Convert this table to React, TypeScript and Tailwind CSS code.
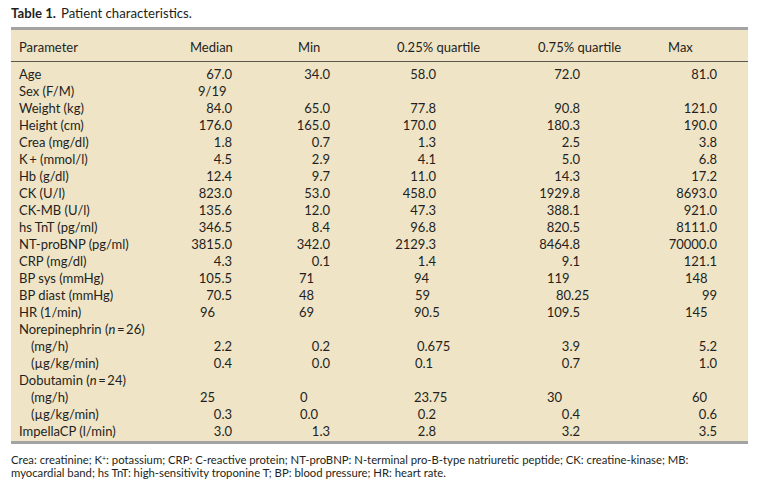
import React from "react";

type Cell = [string, string?];
type Row = { label: React.ReactNode; indent?: boolean; cells?: Cell[] };

const R = "text-right";

const rows: Row[] = [
  { label: "Age", cells: [["67.0"], ["34.0"], ["58.0"], ["72.0"], ["81.0"]] },
  { label: "Sex (F/M)", cells: [["9/19", "pl-[8px]"], [""], [""], [""], [""]] },
  { label: "Weight (kg)", cells: [["84.0"], ["65.0"], ["77.8"], ["90.8"], ["121.0"]] },
  { label: "Height (cm)", cells: [["176.0"], ["165.0"], ["170.0"], ["180.3"], ["190.0"]] },
  { label: "Crea (mg/dl)", cells: [["1.8"], ["0.7"], ["1.3"], ["2.5"], ["3.8"]] },
  { label: "K\u2009+ (mmol/l)", cells: [["4.5"], ["2.9"], ["4.1"], ["5.0"], ["6.8"]] },
  { label: "Hb (g/dl)", cells: [["12.4"], ["9.7"], ["11.0"], ["14.3"], ["17.2"]] },
  { label: "CK (U/l)", cells: [["823.0"], ["53.0"], ["458.0"], ["1929.8"], ["8693.0"]] },
  { label: "CK-MB (U/l)", cells: [["135.6"], ["12.0"], ["47.3"], ["388.1"], ["921.0"]] },
  { label: "hs TnT (pg/ml)", cells: [["346.5"], ["8.4"], ["96.8"], ["820.5"], ["8111.0"]] },
  { label: "NT-proBNP (pg/ml)", cells: [["3815.0"], ["342.0"], ["2129.3"], ["8464.8"], ["70000.0"]] },
  { label: "CRP (mg/dl)", cells: [["4.3"], ["0.1"], ["1.4"], ["9.1"], ["121.1"]] },
  {
    label: "BP sys (mmHg)",
    cells: [["105.5"], ["71", "pl-[67px]"], ["94", "pl-[84px]"], ["119", "pl-[111px]"], ["148", "pl-[105px]"]],
  },
  {
    label: "BP diast (mmHg)",
    cells: [["70.5"], ["48", "pl-[67px]"], ["59", "pl-[85px]"], ["80.25", "pl-[120px]"], ["99"]],
  },
  {
    label: "HR (1/min)",
    cells: [["96", "pl-[10px]"], ["69", "pl-[67px]"], ["90.5", "pl-[84px]"], ["109.5"], ["145", "pl-[105px]"]],
  },
  {
    label: (
      <>
        Norepinephrin (<i>n</i>
        {"\u2009=\u200926)"}
      </>
    ),
  },
  {
    label: "(mg/h)",
    indent: true,
    cells: [["2.2"], ["0.2"], ["0.675", "pl-[87px]"], ["3.9"], ["5.2"]],
  },
  {
    label: "(\u00b5g/kg/min)",
    indent: true,
    cells: [["0.4"], ["0.0"], ["0.1", "pl-[85px]"], ["0.7"], ["1.0"]],
  },
  {
    label: (
      <>
        Dobutamin (<i>n</i>
        {"\u2009=\u200924)"}
      </>
    ),
  },
  {
    label: "(mg/h)",
    indent: true,
    cells: [["25", "pl-[10px]"], ["0", "pl-[68px]"], ["23.75", "pl-[84px]"], ["30", "pl-[111px]"], ["60", "pl-[112px]"]],
  },
  {
    label: "(\u00b5g/kg/min)",
    indent: true,
    cells: [["0.3"], ["0.0", "pl-[68px]"], ["0.2"], ["0.4"], ["0.6"]],
  },
  { label: "ImpellaCP (l/min)", cells: [["3.0"], ["1.3"], ["2.8"], ["3.2"], ["3.5"]] },
];

const colW = ["w-[42px]", "w-[98px]", "w-[106px]", "w-[144px]", "w-[137px]"];

function DataRow({ row }: { row: Row }) {
  return (
    <div className="flex h-[17px] items-center whitespace-nowrap">
      <div className={`w-[179px] shrink-0 ${row.indent ? "pl-[20px]" : "pl-[8px]"}`}>{row.label}</div>
      {row.cells?.map(([text, cls], i) => (
        <div key={i} className={`${colW[i]} shrink-0 ${cls ?? R}`}>
          {text}
        </div>
      ))}
    </div>
  );
}

export default function App() {
  return (
    <div className="h-[488px] w-[757px] overflow-hidden bg-white font-['Lato',sans-serif] text-[#231f20] tabular-nums">
      {/* Caption */}
      <div className="flex h-[27px] items-center pl-[11px] text-[13.2px]">
        <span className="font-bold">Table 1.</span>
        <span className="ml-[5px]">Patient characteristics.</span>
      </div>

      {/* Table */}
      <div className="ml-[11px] w-[737px] border-y-[3px] border-[#a3a3a3] bg-[#f0e4c7] text-[13px]">
        <div className="flex h-[32px] items-center whitespace-nowrap border-b border-[#5a5650] pt-[4px]">
          <div className="w-[179px] shrink-0 pl-[8px]">Parameter</div>
          <div className="w-[42px] shrink-0 text-right">Median</div>
          <div className="w-[98px] shrink-0 pl-[66px]">Min</div>
          <div className="w-[106px] shrink-0 pl-[67px]">0.25% quartile</div>
          <div className="w-[144px] shrink-0 pl-[102px]">0.75% quartile</div>
          <div className="w-[137px] shrink-0 pl-[88px]">Max</div>
        </div>
        <div className="pb-[1px] pt-[4px]">
          {rows.map((row, i) => (
            <DataRow key={i} row={row} />
          ))}
        </div>
      </div>

      {/* Footnote */}
      <div className="pl-[11px] pt-[9px] text-[11.3px] leading-[13px]">
        Crea: creatinine; K<sup className="text-[7px]">+</sup>: potassium; CRP: C-reactive protein; NT-proBNP: N-terminal
        pro-B-type natriuretic peptide; CK: creatine-kinase; MB:
        <br />
        myocardial band; hs TnT: high-sensitivity troponine T; BP: blood pressure; HR: heart rate.
      </div>
    </div>
  );
}
